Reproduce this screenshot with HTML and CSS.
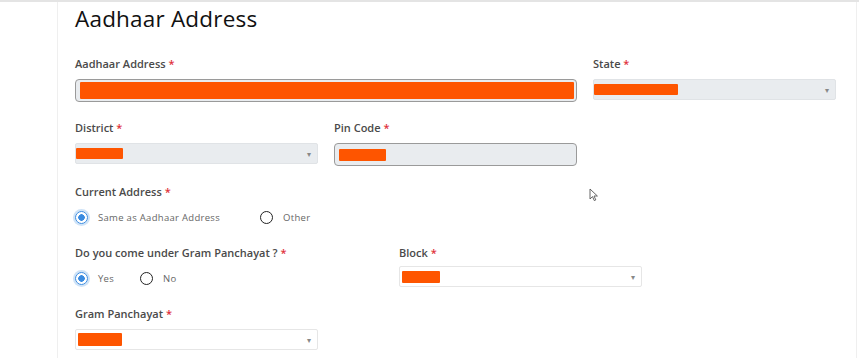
FILE: index.html
```html
<!DOCTYPE html>
<html lang="en">
<head>
	<meta charset="UTF-8">
	<title>Aadhaar Address</title>
	<link rel="stylesheet" href="styles.css">
</head>
<body>
	<div class="topline"></div>
	<div class="page">
		<div class="card">
			<h2 class="title">Aadhaar Address</h2>

			<div class="row row-3">
				<div class="field span-2">
					<label class="lbl">Aadhaar Address <span class="req">*</span></label>
					<div class="input input-ro"><span class="mask mask-long"></span></div>
				</div>
				<div class="field">
					<label class="lbl">State <span class="req">*</span></label>
					<div class="select select-ro"><span class="mask mask-state"></span><span class="arrow">&#9662;</span></div>
				</div>
			</div>

			<div class="row row-3">
				<div class="field">
					<label class="lbl">District <span class="req">*</span></label>
					<div class="select select-ro"><span class="mask mask-district"></span><span class="arrow">&#9662;</span></div>
				</div>
				<div class="field">
					<label class="lbl">Pin Code <span class="req">*</span></label>
					<div class="input input-ro"><span class="mask mask-pin"></span></div>
				</div>
			</div>

			<div class="row row-plain">
				<div class="field">
					<label class="lbl">Current Address <span class="req">*</span></label>
					<div class="radios">
						<label class="radio checked"><span class="dot"></span>Same as Aadhaar Address</label>
						<label class="radio radio-other"><span class="dot"></span>Other</label>
					</div>
				</div>
			</div>

			<div class="row row-block">
				<div class="field">
					<label class="lbl">Do you come under Gram Panchayat ? <span class="req">*</span></label>
					<div class="radios">
						<label class="radio checked"><span class="dot"></span>Yes</label>
						<label class="radio"><span class="dot"></span>No</label>
					</div>
				</div>
				<div class="field">
					<label class="lbl lbl-block">Block <span class="req">*</span></label>
					<div class="select"><span class="mask mask-block"></span><span class="arrow">&#9662;</span></div>
				</div>
			</div>

			<div class="row row-3">
				<div class="field">
					<label class="lbl">Gram Panchayat <span class="req">*</span></label>
					<div class="select"><span class="mask mask-gp"></span><span class="arrow">&#9662;</span></div>
				</div>
			</div>

			<svg class="cursor" width="10" height="14" viewBox="0 0 10 14">
				<path d="M1 1 L1 11 L3.5 8.6 L5.3 12.6 L6.8 11.9 L5 8 L8.4 8 Z" fill="#fff" stroke="#555" stroke-width="0.9"/>
			</svg>
		</div>
	</div>
</body>
</html>
```

FILE: styles.css
```css
*{
	margin: 0;
	padding: 0;
	box-sizing: border-box;
}
body{
	background: #fff;
	font-family: "Open Sans", "Noto Sans", sans-serif;
	color: #444;
}
.topline{
	height: 2px;
	background: #e4e4e4;
}
.page{
	padding-left: 57px;
	padding-right: 2px;
}
.card{
	position: relative;
	border-left: 1px solid #efefef;
	border-right: 1px solid #efefef;
	padding: 3px 17px 0 17px;
	height: 356px;
}
.title{
	font-size: 22.5px;
	font-weight: 500;
	color: #111;
	line-height: 28px;
	margin-bottom: 24px;
	letter-spacing: 0.2px;
}

.row{
	display: grid;
	grid-template-columns: 243px 243px 243px;
	column-gap: 16px;
	margin-bottom: 19px;
}
.row-plain{
	display: block;
}
.row-block{
	grid-template-columns: 308px 243px;
}
.span-2{
	grid-column: span 2;
}
.field{
	display: flex;
	flex-direction: column;
}
.lbl{
	font-size: 11px;
	font-weight: 600;
	color: #4a4a4a;
	line-height: 14px;
	margin-bottom: 8px;
	white-space: nowrap;
}
.lbl-block{
	margin-bottom: 6px;
}
.req{
	color: #e0303a;
}

.input, .select{
	position: relative;
	height: 22px;
	display: flex;
	align-items: center;
}
.input-ro{
	background: #e9ecef;
	border: 1px solid #9a9a9a;
	border-radius: 4px;
	padding-left: 4px;
	height: 23px;
}
.select{
	background: #fff;
	border: 1px solid #e6e6e6;
	border-radius: 2px;
	height: 21px;
}
.select-ro{
	background: #e9ecef;
	border-color: #e0e3e6;
}
.arrow{
	position: absolute;
	right: 6px;
	top: 4px;
	font-size: 8px;
	color: #888;
}
.mask{
	display: block;
	background: #fe5500;
	border-radius: 1px;
}
.mask-long{
	width: 494px;
	height: 17px;
}
.mask-state{
	width: 84px;
	height: 11px;
}
.mask-district{
	width: 47px;
	height: 11px;
}
.mask-pin{
	width: 47px;
	height: 12px;
}
.mask-block{
	width: 38px;
	height: 12px;
	margin-left: 2px;
}
.mask-gp{
	width: 44px;
	height: 13px;
	margin-left: 2px;
}

.radios{
	display: flex;
	align-items: center;
	height: 20px;
	white-space: nowrap;
}
.radio{
	display: flex;
	align-items: center;
	font-size: 9.5px;
	letter-spacing: 0.3px;
	color: #666;
	margin-right: 26px;
}
.radio-other{
	margin-left: 14px;
}
.dot{
	flex: none;
	width: 13px;
	height: 13px;
	border: 1.5px solid #222;
	border-radius: 50%;
	margin-right: 10px;
	background: #fff;
}
.checked .dot{
	border: 1.5px solid #3a8be0;
	background: radial-gradient(circle, #3a8be0 0, #3a8be0 3px, #fff 3.5px);
	box-shadow: 0 0 0 2px #cfe3f7;
}

.cursor{
	position: absolute;
	left: 531px;
	top: 186px;
}
```
